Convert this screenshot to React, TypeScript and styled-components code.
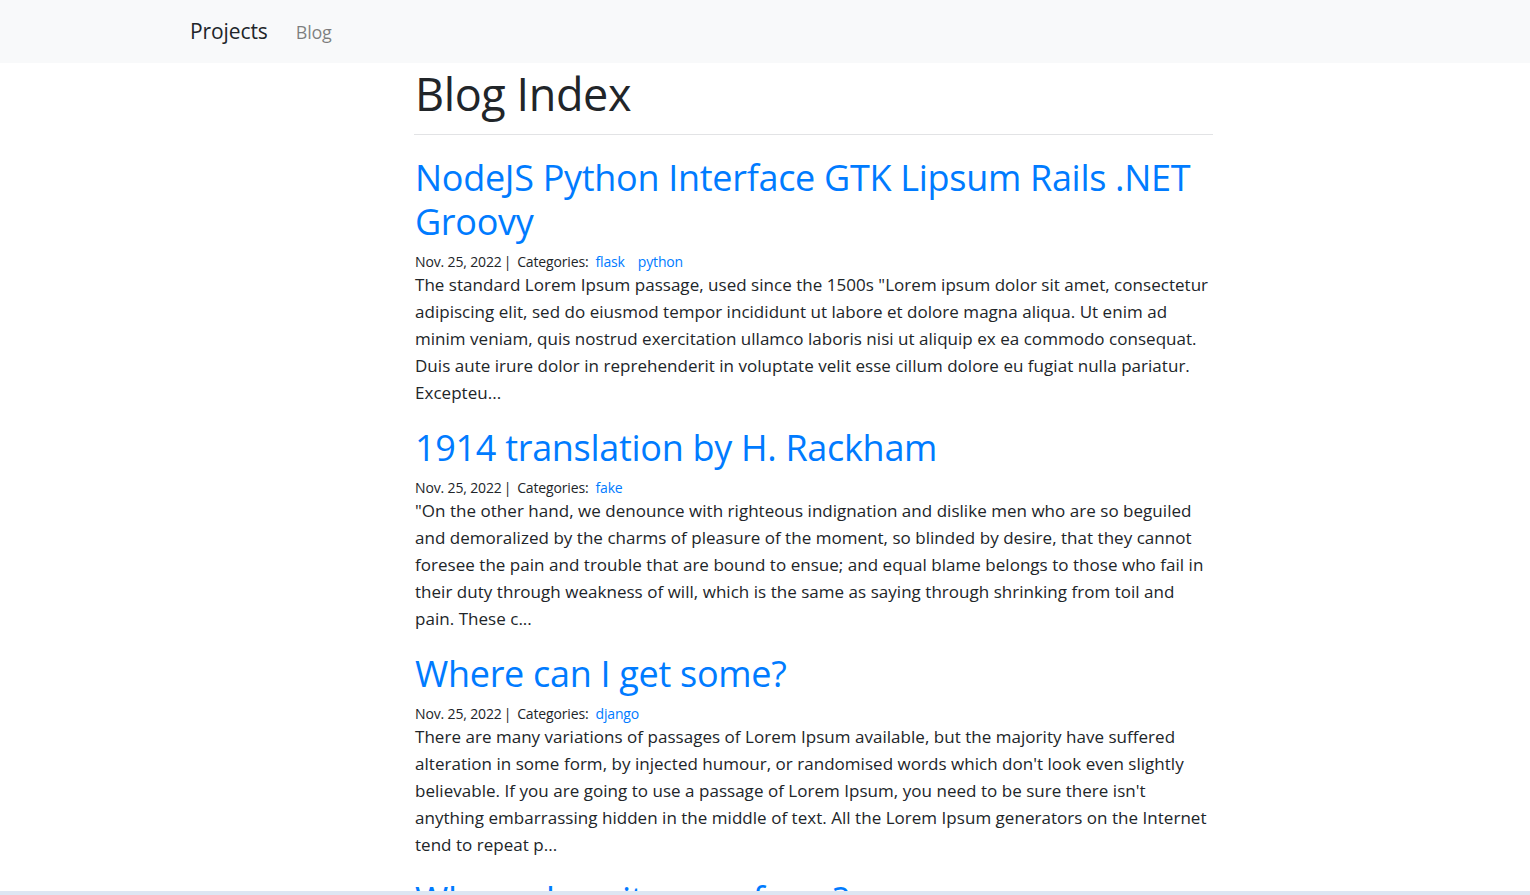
import React from "react";
import styled, { createGlobalStyle } from "styled-components";

const GlobalStyle = createGlobalStyle`
  html, body { margin: 0; padding: 0; }
  body {
    background: #ffffff;
    color: #212529;
    font-family: "Open Sans", Lato, sans-serif;
  }
  a { text-decoration: none; }
`;

const Navbar = styled.nav`
  background: #f8f9fa;
  height: 63px;
  display: flex;
  align-items: center;
  padding-left: 190px;
  gap: 28px;
`;

const Brand = styled.a`
  font-size: 21px;
  letter-spacing: -0.1px;
  color: #212529;
  padding-bottom: 1px;
`;

const NavLink = styled.a`
  font-size: 18px;
  letter-spacing: -0.2px;
  color: rgba(0, 0, 0, 0.5);
`;

const Main = styled.main`
  width: 798px;
  margin-left: 415px;
`;

const PageTitle = styled.h1`
  margin: 0;
  font-size: 45px;
  font-weight: 400;
  line-height: 60px;
  padding-top: 1px;
  letter-spacing: -0.4px;
`;

const Rule = styled.hr`
  margin: 10px 0 21px -1px;
  border: 0;
  border-top: 1px solid #e2e3e5;
`;

const Post = styled.article`
  margin-bottom: 20px;
`;

const PostTitle = styled.a`
  display: block;
  font-size: 36px;
  line-height: 44px;
  font-weight: 400;
  letter-spacing: -0.3px;
  color: #007bff;
  margin-bottom: 8px;
`;

const Meta = styled.div`
  display: flex;
  align-items: baseline;
  font-size: 14px;
  line-height: 19px;
  letter-spacing: -0.15px;
  color: #212529;
`;

const Sep = styled.span`
  margin: 0 6px 0 2px;
`;

const Category = styled.a`
  color: #007bff;
  margin-left: 13px;
  &:first-of-type { margin-left: 7px; }
`;

const Body = styled.p`
  margin: 0;
  font-size: 17px;
  line-height: 27px;
  letter-spacing: 0.03px;
`;

const BottomBand = styled.div`
  position: fixed;
  left: 0;
  right: 0;
  bottom: 0;
  height: 4px;
  background: #dde6f3;
`;

const posts = [
  {
    title: "NodeJS Python Interface GTK Lipsum Rails .NET Groovy",
    cats: ["flask", "python"],
    body:
      'The standard Lorem Ipsum passage, used since the 1500s "Lorem ipsum dolor sit amet, consectetur adipiscing elit, sed do eiusmod tempor incididunt ut labore et dolore magna aliqua. Ut enim ad minim veniam, quis nostrud exercitation ullamco laboris nisi ut aliquip ex ea commodo consequat. Duis aute irure dolor in reprehenderit in voluptate velit esse cillum dolore eu fugiat nulla pariatur. Excepteu...',
  },
  {
    title: "1914 translation by H. Rackham",
    cats: ["fake"],
    body:
      '"On the other hand, we denounce with righteous indignation and dislike men who are so beguiled and demoralized by the charms of pleasure of the moment, so blinded by desire, that they cannot foresee the pain and trouble that are bound to ensue; and equal blame belongs to those who fail in their duty through weakness of will, which is the same as saying through shrinking from toil and pain. These c...',
  },
  {
    title: "Where can I get some?",
    cats: ["django"],
    body:
      "There are many variations of passages of Lorem Ipsum available, but the majority have suffered alteration in some form, by injected humour, or randomised words which don't look even slightly believable. If you are going to use a passage of Lorem Ipsum, you need to be sure there isn't anything embarrassing hidden in the middle of text. All the Lorem Ipsum generators on the Internet tend to repeat p...",
  },
  {
    title: "Where does it come from?",
    cats: ["python"],
    body:
      "Contrary to popular belief, Lorem Ipsum is not simply random text. It has roots in a piece of classical Latin literature from 45 BC, making it over 2000 years old. Richard McClintock, a Latin professor at Hampden-Sydney College in Virginia, looked up one of the more obscure Latin words, consectetur...",
  },
];

export default function App() {
  return (
    <>
      <GlobalStyle />
      <Navbar>
        <Brand href="#">Projects</Brand>
        <NavLink href="#">Blog</NavLink>
      </Navbar>
      <Main>
        <PageTitle>Blog Index</PageTitle>
        <Rule />
        {posts.map((p) => (
          <Post key={p.title}>
            <PostTitle href="#">{p.title}</PostTitle>
            <Meta>
              Nov. 25, 2022<Sep>|</Sep>Categories:
              {p.cats.map((c) => (
                <Category key={c} href="#">
                  {c}
                </Category>
              ))}
            </Meta>
            <Body>{p.body}</Body>
          </Post>
        ))}
      </Main>
      <BottomBand />
    </>
  );
}
